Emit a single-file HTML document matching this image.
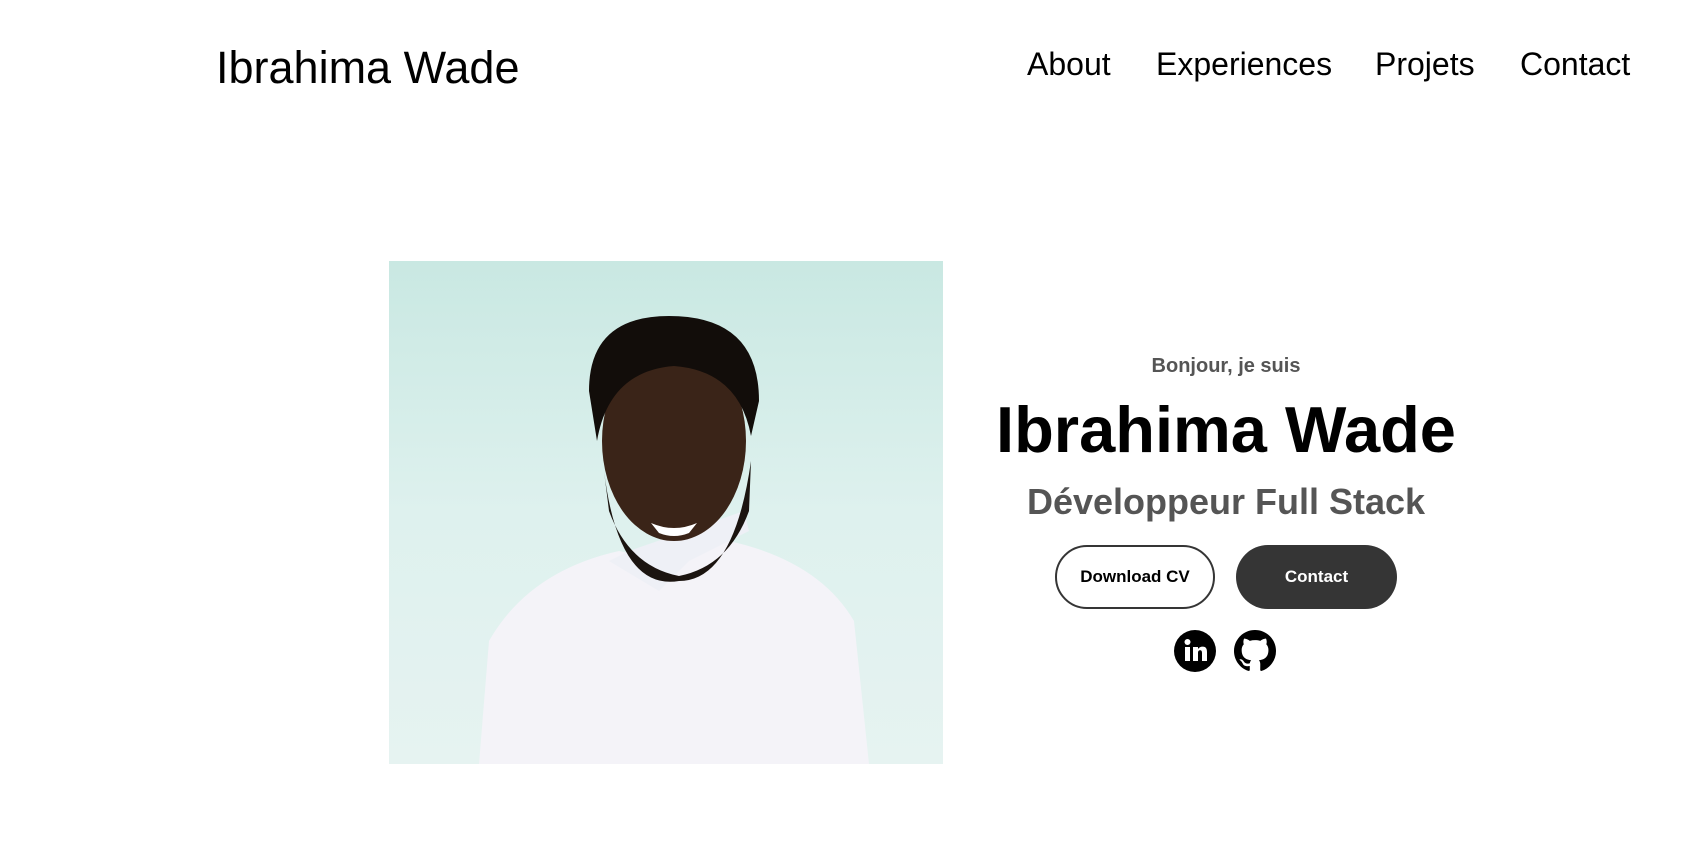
<!DOCTYPE html>
<html><head><meta charset="utf-8"><style>
*{margin:0;padding:0;box-sizing:border-box}
body{width:1683px;height:859px;background:#fff;font-family:"Liberation Sans",Arial,sans-serif;position:relative;overflow:hidden;color:#000}
.a{position:absolute;white-space:nowrap}
.nav{font-size:32px;top:46px}
.photo{position:absolute;left:389px;top:261px;width:554px;height:503px;background:linear-gradient(180deg,#c9e8e2 0%,#def1ee 50%,#e6f3f1 100%);overflow:hidden}
.btn{position:absolute;top:545px;height:64px;border-radius:32px;font-weight:bold;font-size:17px;display:flex;align-items:center;justify-content:center}
</style></head><body>
<div class="a" style="left:216px;top:42px;font-size:45px">Ibrahima Wade</div>
<div class="a nav" style="left:1027px">About</div>
<div class="a nav" style="left:1156px">Experiences</div>
<div class="a nav" style="left:1375px">Projets</div>
<div class="a nav" style="left:1520px">Contact</div>

<div class="photo">
<svg width="554" height="503" viewBox="0 0 554 503">
<path d="M90 503 L100 380 Q140 310 230 290 L280 300 L340 280 Q430 300 465 360 L480 503 Z" fill="#f4f3f8"/>
<path d="M220 300 L270 330 L300 300 L360 270 L355 250 L240 290 Z" fill="#eef0f6"/>
<ellipse cx="285" cy="180" rx="72" ry="100" fill="#3a2418"/>
<path d="M215 210 Q230 330 290 320 Q345 320 362 200 L360 250 Q340 305 290 315 Q240 305 220 250 Z" fill="#1b1410"/>
<path d="M200 130 Q200 55 280 55 Q370 55 370 140 L362 175 Q350 110 285 105 Q220 110 208 180 Z" fill="#120d0a"/>
<path d="M262 262 Q285 272 308 262 L300 272 Q285 278 270 272 Z" fill="#fff"/>
</svg>
</div>

<div class="a" style="left:1226px;transform:translateX(-50%);top:355px;font-size:20px;font-weight:bold;color:#555">Bonjour, je suis</div>
<div class="a" style="left:1226px;transform:translateX(-50%);top:392px;font-size:65px;font-weight:bold">Ibrahima Wade</div>
<div class="a" style="left:1226px;transform:translateX(-50%);top:481px;font-size:36px;font-weight:bold;color:#555">Développeur Full Stack</div>
<div class="btn" style="left:1055px;width:160px;border:2px solid #353535;color:#000">Download CV</div>
<div class="btn" style="left:1236px;width:161px;background:#353535;color:#fff">Contact</div>

<svg class="a" style="left:1174px;top:630px" width="42" height="42" viewBox="0 0 42 42">
<circle cx="21" cy="21" r="21" fill="#000"/>
<rect x="11" y="17" width="5" height="14" fill="#fff"/><circle cx="13.5" cy="12" r="3" fill="#fff"/>
<path d="M19 17h5v2c1-1.6 2.6-2.4 4.6-2.4 3.6 0 4.4 2.4 4.4 5.5V31h-5v-8c0-1.8-.5-2.8-2-2.8s-2 1.2-2 2.8v8h-5z" fill="#fff"/>
</svg>
<svg class="a" style="left:1234px;top:630px" width="42" height="42" viewBox="0 0 16 16">
<path fill="#000" d="M8 0C3.580 0 0 3.58 0 8c0 3.54 2.290 6.53 5.470 7.59.4.07.55-.17.55-.38 0-.19-.01-.82-.01-1.49-2.010.37-2.530-.49-2.690-.94-.09-.23-.48-.94-.82-1.130-.28-.15-.68-.52-.01-.53.63-.01 1.080.58 1.230.82.72 1.210 1.870.87 2.330.66.07-.52.28-.87.51-1.070-1.780-.2-3.640-.89-3.640-3.950 0-.87.31-1.590.82-2.150-.08-.2-.36-1.020.08-2.120 0 0 .67-.21 2.200.82.64-.18 1.320-.27 2-.27.68 0 1.360.09 2 .27 1.530-1.040 2.200-.82 2.200-.82.44 1.100.16 1.920.08 2.120.51.56.82 1.270.82 2.150 0 3.070-1.870 3.750-3.650 3.950.29.25.54.73.54 1.480 0 1.070-.01 1.930-.01 2.200 0 .21.15.46.55.38A8.013 8.013 0 0016 8c0-4.420-3.580-8-8-8z"/>
</svg>
</body></html>
